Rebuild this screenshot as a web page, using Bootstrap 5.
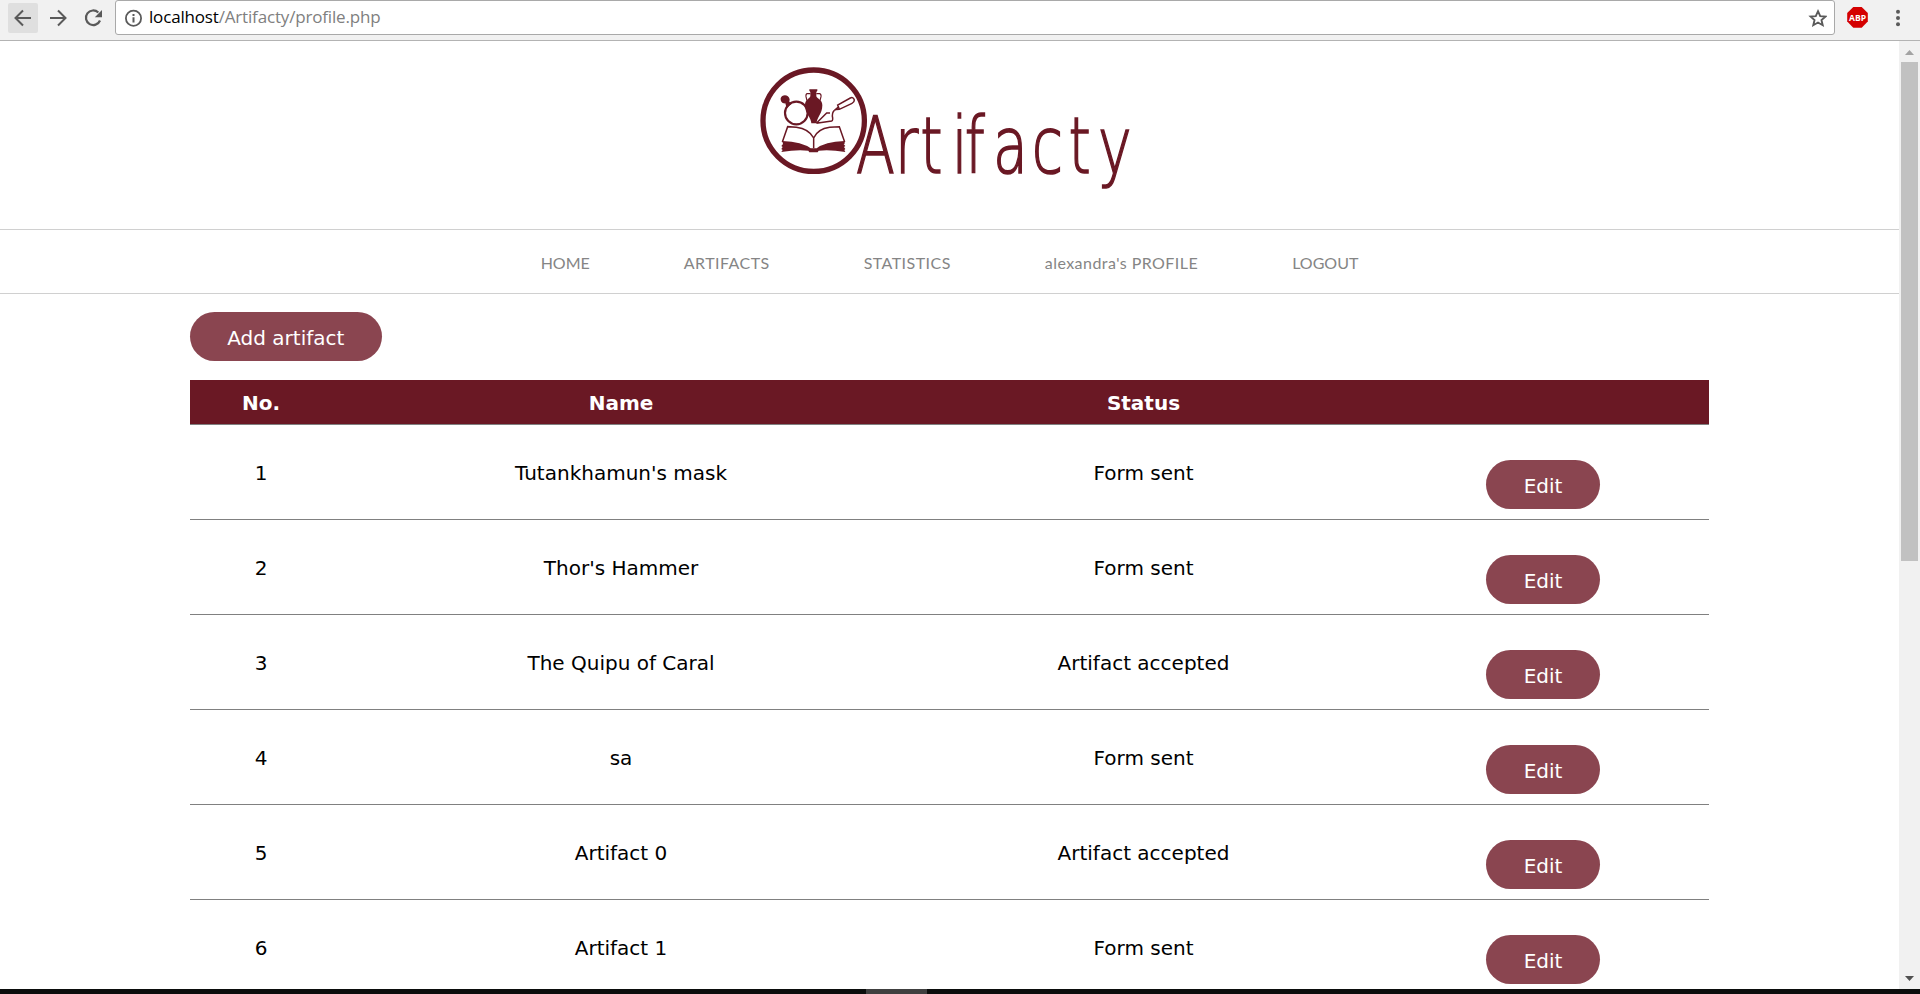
<!DOCTYPE html>
<html lang="en">
<head>
<meta charset="utf-8">
<title>Artifacty</title>
<link href="https://cdn.jsdelivr.net/npm/bootstrap@5.3.0/dist/css/bootstrap.min.css" rel="stylesheet">
<style>
  :root { --wine: #6a1824; }
  body { font-family: "DejaVu Sans", sans-serif; font-size: 20px; line-height: 24px; color: #000; }
  .browser-bar { height: 41px; background: #f1f1f1; border-bottom: 1px solid #b3b3b3; padding-left: 8px; }
  .tool { width: 30px; height: 30px; margin: 3px 5px 0 0; border-radius: 2px; }
  .tool.active-tool { background: #dfdfdf; }
  .address { width: 1720px; height: 35px; margin-left: 2px; padding: 0 7px 0 9px; border: 1px solid #a9a9a9; border-radius: 3px; background: #fff; }
  .url { font: 17px/32px "Open Sans", sans-serif; letter-spacing: -.17px; margin-left: 6px; color: #808080; }
  .page-body { height: 948px; }
  .logo-area { height: 188px; }
  .main-nav { height: 65px; border-top: 1px solid #d0d0d0; border-bottom: 1px solid #d0d0d0; gap: 94px; padding-top: 3px; }
  .main-nav a { font: 16px/24px Lato, sans-serif; color: #858585; text-decoration: none; white-space: nowrap; display: block; }
  .main-nav .spaced { letter-spacing: .45px; }
  .content { margin: 18px 190px 0; }
  .btn-wine { background: #8a4550; color: #fff; height: 49px; font-size: 20px; line-height: 24px; padding: 14px 37.25px 11px; border: 0; }
  .items { table-layout: fixed; width: 1519px; margin-top: 19px; border-collapse: separate; border-spacing: 0; }
  .items th { background: var(--wine); color: #fff; height: 45px; padding: 2px 0 0; text-align: center; border-bottom: 1px solid #808080; }
  .items td { height: 95px; padding: 2px 0 0; text-align: center; vertical-align: middle; border-bottom: 1px solid #808080; }
  .items td.actions { padding-top: 35px; vertical-align: top; }
  .scroll { width: 21px; background: #f1f1f1; }
  .thumb { width: 17px; height: 499px; background: #c1c1c1; }
  .taskbar { height: 5px; background: #0b0d0c; padding-left: 866px; }
  .taskbar div { width: 61px; height: 5px; background: #404040; }
</style>
</head>
<body class="overflow-hidden vh-100 bg-white">
<header class="browser-bar d-flex">
  <div class="tool active-tool"><svg width="30" height="30" fill="none" stroke="#5a5a5a" stroke-width="2"><path d="M23 15H8M15 7.5L7.5 15L15 22.5"/></svg></div>
  <div class="tool"><svg width="30" height="30" fill="none" stroke="#5a5a5a" stroke-width="2"><path d="M7 15H22M15 7.5L22.5 15L15 22.5"/></svg></div>
  <div class="tool"><svg width="30" height="30" fill="none" stroke="#5a5a5a" stroke-width="2.2"><path d="M20.3 9.5A7.3 7.3 0 1 0 22 17.5"/><path d="M24 7V14.2H16.8Z" fill="#5a5a5a" stroke="none"/></svg></div>
  <div class="address d-flex">
    <svg class="mt-2" width="18" height="20" fill="none" stroke="#5a5a5a"><circle cx="8.500" cy="9.200" r="7.600" stroke-width="1.800"/><path d="M8.500 8.300V13.500M8.500 5V7" stroke-width="2"/></svg>
    <span class="url"><span class="text-black">localhost</span>/Artifacty/profile.php</span>
    <svg class="ms-auto" width="20" height="32" fill="none" stroke="#5a5a5a" stroke-width="1.9"><path d="M11 10.2L13.2 15.1L18.4 15.6L14.5 19.1L15.7 24.2L11 21.5L6.3 24.2L7.5 19.1L3.6 15.6L8.8 15.1Z"/></svg>
  </div>
  <svg width="82" height="38"><path d="M18.300 7H26.700L32.800 13V21.500L26.700 27.800H18.300L12.200 21.500V13Z" fill="#d40000"/><text x="22.500" y="20.800" text-anchor="middle" font-family="Open Sans" font-size="9.500" font-weight="700" fill="#fff" textLength="17" lengthAdjust="spacingAndGlyphs">ABP</text><g fill="#5a5a5a"><circle cx="63" cy="11.700" r="2"/><circle cx="63" cy="18" r="2"/><circle cx="63" cy="24.300" r="2"/></g></svg>
</header>
<div class="page-body d-flex overflow-hidden">
  <main class="flex-grow-1">
    <div class="logo-area">
      <svg width="1899" height="188" viewBox="0 41 1899 188">
        <circle cx="813.700" cy="120.700" r="50.700" fill="none" stroke="#6a1824" stroke-width="5.300"/>
        <!-- emblem: magnifier, amphora, trowel and open book -->
        <g transform="translate(750 56) scale(.33333)" fill="none" stroke="#6a1824" stroke-width="4.500">
          <circle cx="139" cy="171" r="34" stroke-width="6.500"/>
          <path d="M92 127C95 115 116 114 119 130L118 137L124 144L110 157L106 142C100 144 91 139 92 127Z" fill="#6a1824" stroke="none"/>
          <path d="M178 100H202V104L199 108V121C202 130 217 130 217 148C217 174 200 185 200 202H184C184 185 165 174 165 148C165 130 178 130 181 121V108L178 104Z" fill="#6a1824" stroke="none"/>
          <path d="M181 113H171Q167 114 168 122L171 134M199 113H209Q214 114 213 122L210 134" stroke-width="3.500"/>
          <path d="M199 202L230 171H240M199 202L245 195Q250 193 247 180Q247 163 258 161M268 160L263 147L301 126Q310 122 313 132Q313 139 306 142L268 160L256 161L264 154" />
          <path d="M191 277V246Q177 219 139 214L113 212L97 258M191 246Q203 219 239 214L268 212L284 258"/>
          <path d="M97 255Q157 258 182 277H200Q223 258 284 255V263L281 264L286 270L282 273L286 279L283 282L286 288Q240 280 206 284L203 289H178L175 284Q140 280 94 288L98 282L94 279L98 273L94 270L99 264Z" fill="#6a1824" stroke="none"/>
        </g>
        <text transform="scale(.72 1)" y="173.300" x="1189 1243 1278 1322 1340 1379 1433 1484 1525" font-family="DejaVu Sans Light, DejaVu Sans" font-weight="200" font-size="79" fill="#6a1824" stroke="#6a1824" stroke-width="1.700">Artifacty</text>
      </svg>
    </div>
    <nav class="main-nav d-flex justify-content-center align-items-center">
      <a href="#">HOME</a><a href="#" class="spaced">ARTIFACTS</a><a href="#" class="spaced">STATISTICS</a><a href="#" class="spaced">alexandra's PROFILE</a><a href="#">LOGOUT</a>
    </nav>
    <div class="content">
      <button class="btn btn-wine rounded-pill d-block">Add artifact</button>
      <table class="items">
        <colgroup><col style="width:142px"><col style="width:578px"><col style="width:467px"><col style="width:332px"></colgroup>
        <thead><tr><th>No.</th><th>Name</th><th>Status</th><th></th></tr></thead>
        <tbody>
          <tr><td>1</td><td>Tutankhamun's mask</td><td>Form sent</td><td class="actions"><button class="btn btn-wine rounded-pill d-block mx-auto">Edit</button></td></tr>
          <tr><td>2</td><td>Thor's Hammer</td><td>Form sent</td><td class="actions"><button class="btn btn-wine rounded-pill d-block mx-auto">Edit</button></td></tr>
          <tr><td>3</td><td>The Quipu of Caral</td><td>Artifact accepted</td><td class="actions"><button class="btn btn-wine rounded-pill d-block mx-auto">Edit</button></td></tr>
          <tr><td>4</td><td>sa</td><td>Form sent</td><td class="actions"><button class="btn btn-wine rounded-pill d-block mx-auto">Edit</button></td></tr>
          <tr><td>5</td><td>Artifact 0</td><td>Artifact accepted</td><td class="actions"><button class="btn btn-wine rounded-pill d-block mx-auto">Edit</button></td></tr>
          <tr><td>6</td><td>Artifact 1</td><td>Form sent</td><td class="actions"><button class="btn btn-wine rounded-pill d-block mx-auto">Edit</button></td></tr>
        </tbody>
      </table>
    </div>
  </main>
  <aside class="scroll d-flex flex-column align-items-center flex-shrink-0">
    <svg width="21" height="21" class="flex-shrink-0"><path d="M6 14L10.500 9L15 14Z" fill="#a3a3a3"/></svg>
    <div class="thumb flex-shrink-0"></div>
    <svg width="21" height="21" class="mt-auto flex-shrink-0"><path d="M6 8L10.500 13L15 8Z" fill="#505050"/></svg>
  </aside>
</div>
<footer class="taskbar"><div></div></footer>
<script src="https://cdn.jsdelivr.net/npm/bootstrap@5.3.0/dist/js/bootstrap.bundle.min.js"></script>
</body>
</html>
